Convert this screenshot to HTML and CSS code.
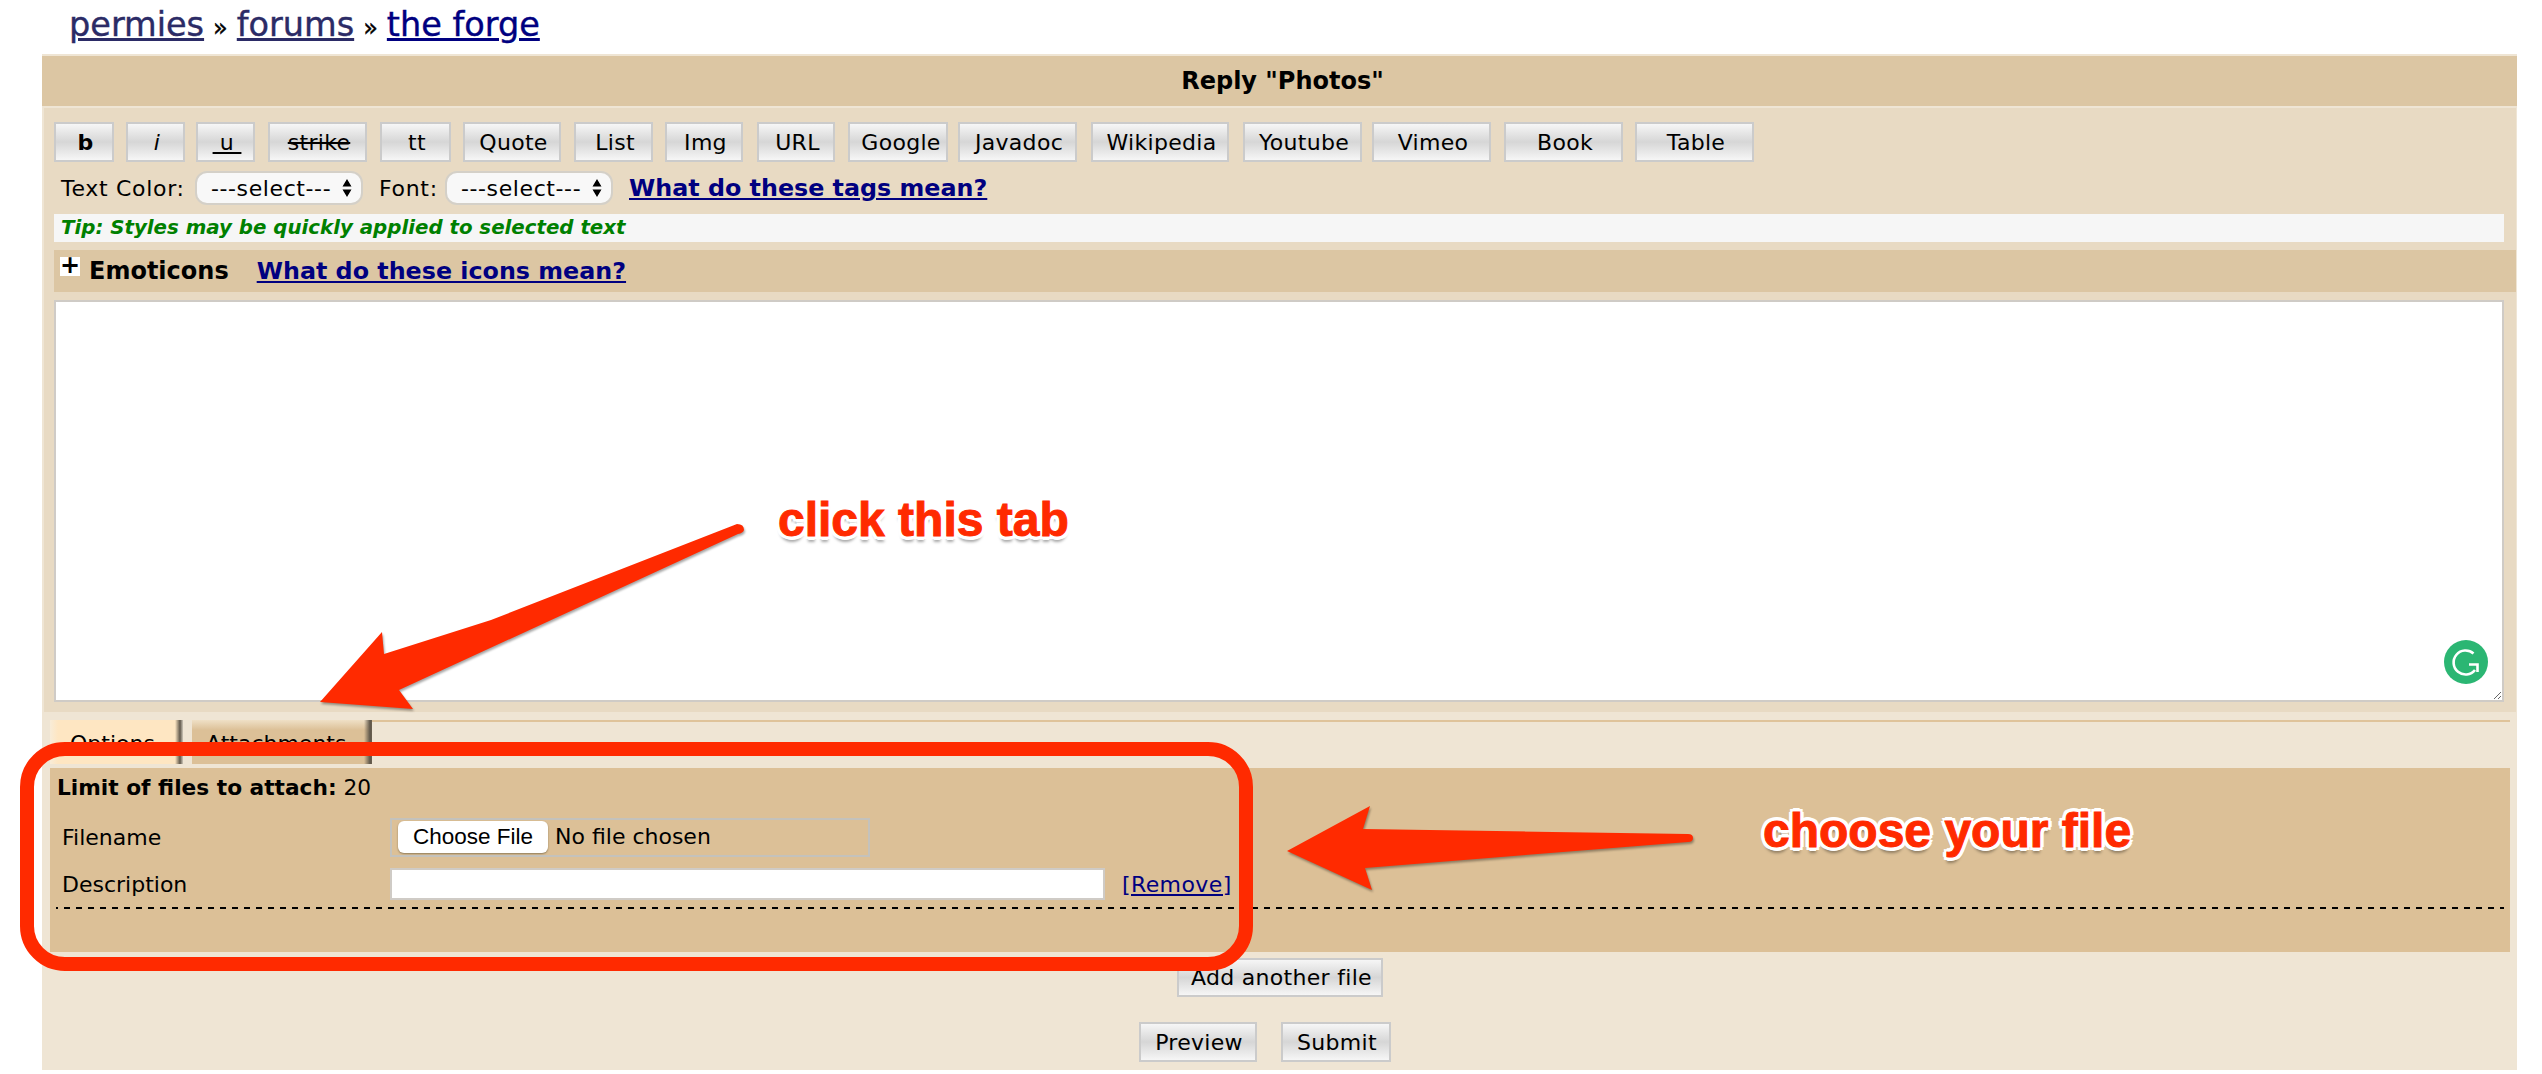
FILE: index.html
```html
<!DOCTYPE html>
<html lang="en">
<head>
    <meta charset="UTF-8">
    <meta name="viewport" content="width=device-width, initial-scale=1.0">
    <title>Reply "Photos"</title>
    <link rel="stylesheet" href="styles.css">
</head>
<body>
    <div class="crumbs">
        <a href="#" class="visited">permies</a>
        <span class="sep">»</span>
        <a href="#" class="visited">forums</a>
        <span class="sep">»</span>
        <a href="#">the forge</a>
    </div>

    <form class="reply-box">
        <div class="reply-title">Reply "Photos"</div>

        <div class="editor">
            <div class="tags">
                <button type="button" class="btn tag-b"><b>b</b></button>
                <button type="button" class="btn tag-i"><i>i</i></button>
                <button type="button" class="btn tag-u"><u>&nbsp;u&nbsp;</u></button>
                <button type="button" class="btn tag-strike"><s>strike</s></button>
                <button type="button" class="btn tag-tt">tt</button>
                <button type="button" class="btn tag-quote">Quote</button>
                <button type="button" class="btn tag-list">List</button>
                <button type="button" class="btn tag-img">Img</button>
                <button type="button" class="btn tag-url">URL</button>
                <button type="button" class="btn tag-google">Google</button>
                <button type="button" class="btn tag-javadoc">Javadoc</button>
                <button type="button" class="btn tag-wikipedia">Wikipedia</button>
                <button type="button" class="btn tag-youtube">Youtube</button>
                <button type="button" class="btn tag-vimeo">Vimeo</button>
                <button type="button" class="btn tag-book">Book</button>
                <button type="button" class="btn tag-table">Table</button>
            </div>

            <div class="format-row">
                <label class="color-label" for="textColor">Text Color:</label>
                <select id="textColor"><option>---select---</option></select>
                <label class="font-label" for="textFont">Font:</label>
                <select id="textFont"><option>---select---</option></select>
                <a href="#" class="help-link tags-help">What do these tags mean?</a>
            </div>

            <div class="tip">Tip: Styles may be quickly applied to selected text</div>

            <div class="emoticons">
                <span class="plus">+</span>
                <span class="emoticons-title">Emoticons</span>
                <a href="#" class="help-link icons-help">What do these icons mean?</a>
            </div>

            <div class="message">
                <textarea></textarea>
                <svg class="grammarly" width="44" height="44" viewBox="0 0 44 44">
                    <circle cx="22" cy="22" r="22" fill="#2bb673"/>
                    <path d="M29.5 13.5A12 12 0 1 0 31 30M25 24.5H33.5V32" fill="none" stroke="#fff" stroke-width="2.6"/>
                </svg>
            </div>
        </div>

        <div class="lower">
            <div class="tab-row">
                <div class="tab tab-options">Options</div>
                <div class="tab tab-attachments">Attachments</div>
                <div class="tab-line"></div>
            </div>

            <div class="attach-panel">
                <div class="limit"><b>Limit of files to attach:</b> 20</div>
                <div class="attach-row file-row">
                    <label for="file1">Filename</label>
                    <input type="file" id="file1">
                </div>
                <div class="attach-row desc-row">
                    <label for="desc1">Description</label>
                    <input type="text" id="desc1">
                    <a href="#" class="remove">[Remove]</a>
                </div>
                <div class="dashes"></div>
            </div>

            <div class="add-row">
                <button type="button" class="btn add-file">Add another file</button>
            </div>
            <div class="submit-row">
                <button type="button" class="btn preview">Preview</button>
                <button type="submit" class="btn submit">Submit</button>
            </div>
        </div>
    </form>

    <!-- red markup drawn over the screenshot -->
    <svg class="markup" width="2542" height="1074" viewBox="0 0 2542 1074">
        <path class="arrow" d="M320 702L382 632L384 654L491 620L737 524Q744 524 744 530Q743 533 738 534L399 690L413 709Z"/>
        <path class="arrow" d="M1287 851L1370 806L1363 829L1688 834Q1693 834 1693 838Q1693 842 1688 842L1365 868L1372 890Z"/>
    </svg>
    <div class="frame"></div>
    <div class="note note-tab">click this tab</div>
    <div class="note note-file">choose your file</div>
</body>
</html>
```

FILE: styles.css
```css
html, body {
    height: 1074px;
    overflow: hidden;
}
body {
    position: relative;
    margin: 0;
    background-color: white;
    color: black;
    font-family: "DejaVu Sans", Verdana, sans-serif;
    font-size: 22px;
}
a {
    color: #000080;
}

/* breadcrumbs */
.crumbs {
    display: flex;
    align-items: baseline;
    gap: 9px;
    height: 54px;
    box-sizing: border-box;
    padding: 3px 0 0 69px;
    font-size: 33.5px;
    line-height: 44px;
    -webkit-text-stroke: 0.4px currentColor;
}
.crumbs .visited {
    color: #2b2b66;
}
.crumbs .sep {
    font-size: 24px;
}

.reply-box {
    margin-left: 42px;
    width: 2475px;
    height: 1016px;
    box-sizing: border-box;
    padding: 2px 1px 0 2px;
    background-color: #efe5d4;
}
.reply-title {
    height: 50px;
    margin-left: -2px;
    margin-right: -1px;
    padding-left: 6px;
    background-color: #dcc6a3;
    font-weight: bold;
    font-size: 24px;
    line-height: 50px;
    text-align: center;
}

/* editor */
.editor {
    margin-top: 2px;
    height: 604px;
    box-sizing: border-box;
    padding: 14px 0 0 10px;
    background-color: #e8dac3;
}
.tags {
    display: flex;
}
.btn {
    height: 40px;
    padding: 0 0 0 3px;
    border: 2px solid #cbcbcb;
    background: linear-gradient(#f6f6f6, #d6d6d6 50%, #f6f6f6);
    color: black;
    font-family: "DejaVu Sans", Verdana, sans-serif;
    font-size: 22px;
    letter-spacing: 0.3px;
}
.tag-b { width: 60px; margin-right: 12px; }
.tag-i { width: 59px; margin-right: 11px; }
.tag-u { width: 59px; margin-right: 13px; }
.tag-strike { width: 99px; margin-right: 13px; }
.tag-tt { width: 71px; margin-right: 12px; }
.tag-quote { width: 98px; margin-right: 13px; }
.tag-list { width: 79px; margin-right: 12px; }
.tag-img { width: 78px; margin-right: 14px; }
.tag-url { width: 78px; margin-right: 13px; }
.tag-google { width: 100px; margin-right: 10px; padding-left: 6px; }
.tag-javadoc { width: 119px; margin-right: 14px; }
.tag-wikipedia { width: 138px; margin-right: 14px; }
.tag-youtube { width: 119px; margin-right: 10px; }
.tag-vimeo { width: 119px; margin-right: 13px; }
.tag-book { width: 119px; margin-right: 12px; }
.tag-table { width: 119px; }

.format-row {
    display: flex;
    align-items: center;
    height: 34px;
    margin-top: 9px;
    padding-left: 7px;
    letter-spacing: 0.7px;
}
.color-label {
    width: 134px;
}
.font-label {
    width: 66px;
    margin-left: 16px;
}
select {
    appearance: none;
    width: 168px;
    height: 34px;
    box-sizing: border-box;
    padding: 0 0 0 14px;
    border: 2px solid #d4d0c8;
    border-radius: 12px;
    background: #f8f8f8 url("data:image/svg+xml,%3Csvg xmlns='http://www.w3.org/2000/svg' width='10' height='20'%3E%3Cpath d='M5 1L9.5 8.500H.5ZM5 19L.5 11.500H9.500Z'/%3E%3C/svg%3E") no-repeat right 9px center;
    color: black;
    font-family: "DejaVu Sans", Verdana, sans-serif;
    font-size: 22px;
    letter-spacing: 0.6px;
}
.help-link {
    font-weight: bold;
    font-size: 23.8px;
    letter-spacing: 0;
}
.tags-help {
    margin-left: 16px;
}
.tip {
    height: 28px;
    margin-top: 9px;
    margin-right: 12px;
    padding-left: 7px;
    background-color: #f6f6f6;
    color: green;
    font-weight: bold;
    font-style: italic;
    font-size: 19.8px;
    line-height: 28px;
}
.emoticons {
    display: flex;
    align-items: center;
    height: 42px;
    margin-top: 8px;
    padding-left: 6px;
    background-color: #dcc6a3;
}
.plus {
    align-self: flex-start;
    width: 20px;
    height: 19px;
    margin-top: 7px;
    background-color: white;
    font-weight: bold;
    font-size: 24px;
    line-height: 17px;
    text-align: center;
}
.emoticons-title {
    margin-left: 9px;
    font-weight: bold;
    font-size: 24px;
}
.icons-help {
    margin-left: 28px;
}
.message {
    position: relative;
    margin-top: 8px;
    width: 2450px;
}
.message textarea {
    display: block;
    width: 100%;
    height: 402px;
    box-sizing: border-box;
    border: 2px solid #cfcbc6;
    background-color: white;
}
.grammarly {
    position: absolute;
    right: 16px;
    bottom: 18px;
}

/* tabs and attachments */
.lower {
    margin: 8px 6px 0;
}
.tab-row {
    display: flex;
    height: 44px;
}
.tab {
    box-sizing: border-box;
    padding-top: 11px;
    line-height: 26px;
    color: black;
}
.tab-options {
    width: 133px;
    margin-right: 9px;
    padding-left: 20px;
    background:
        linear-gradient(90deg, transparent calc(100% - 8px), #5f574a calc(100% - 3px), #cfc8ba),
        linear-gradient(90deg, #f8ecd8, #fee6c2 8px);
}
.tab-attachments {
    width: 180px;
    padding-left: 14px;
    background:
        linear-gradient(90deg, transparent calc(100% - 8px), #5f574a calc(100% - 2px), #6b6050),
        linear-gradient(#efe0c6, #dcc097 10px);
}
.tab-line {
    flex: 1;
    height: 2px;
    background-color: #dfc39a;
}
.attach-panel {
    height: 184px;
    margin-top: 4px;
    overflow: hidden;
    background-color: #dcc097;
}
.limit {
    margin-top: 5px;
    padding-left: 7px;
    line-height: 30px;
    font-size: 21.7px;
}
.attach-row {
    display: flex;
    align-items: center;
}
.attach-row label {
    width: 328px;
    margin-left: 12px;
}
.file-row {
    margin-top: 15px;
}
.file-row input {
    width: 480px;
    height: 39px;
    box-sizing: border-box;
    padding: 1px 0 0 6px;
    border: 2px solid #c4c2bc;
    font-family: "DejaVu Sans", Verdana, sans-serif;
    font-size: 22px;
}
.file-row input::file-selector-button {
    width: 150px;
    height: 32px;
    margin-right: 7px;
    padding: 0;
    border: none;
    border-radius: 6px;
    background-color: white;
    box-shadow: 0 1px 2px #8f7a58;
    color: black;
    font-family: "Liberation Sans", Arial, sans-serif;
    font-size: 22.5px;
}
.desc-row {
    margin-top: 11px;
}
.desc-row input {
    width: 715px;
    height: 32px;
    box-sizing: border-box;
    border: 2px solid #cfcbc6;
    background-color: white;
}
.remove {
    margin-left: 17px;
    letter-spacing: 0.4px;
}
.dashes {
    height: 2px;
    margin: 7px 6px 0;
    background: linear-gradient(90deg, black 6px, transparent 6px) -4px 0 / 12px 2px repeat-x;
}
.add-row {
    display: flex;
    justify-content: center;
    margin-top: 6px;
}
.add-file {
    width: 206px;
    height: 39px;
}
.submit-row {
    display: flex;
    justify-content: center;
    gap: 24px;
    margin-top: 25px;
    padding-right: 31px;
}
.preview {
    width: 118px;
}
.submit {
    width: 110px;
}

/* markup over the page */
.markup {
    position: absolute;
    left: 0;
    top: 0;
    pointer-events: none;
}
.arrow {
    fill: #ff2a00;
    filter: drop-shadow(1px 2px 1px rgba(0, 0, 0, 0.35));
}
.frame {
    position: absolute;
    left: 20px;
    top: 742px;
    width: 1205px;
    height: 201px;
    border: 14px solid #ff2a00;
    border-radius: 45px;
    pointer-events: none;
}
.note {
    position: absolute;
    color: #ff2a00;
    font-family: "Liberation Sans", Arial, sans-serif;
    font-weight: bold;
    font-size: 48px;
    line-height: 56px;
    white-space: nowrap;
    -webkit-text-stroke: 1px #ff2a00;
    text-shadow:
        0 -4px 0 white, 3px -3px 0 white, 4px 0 0 white, 3px 3px 0 white,
        0 4px 0 white, -3px 3px 0 white, -4px 0 0 white, -3px -3px 0 white,
        0 6px 3px rgba(0, 0, 0, 0.35);
}
.note-tab {
    left: 778px;
    top: 492px;
}
.note-file {
    left: 1763px;
    top: 803px;
}
```
